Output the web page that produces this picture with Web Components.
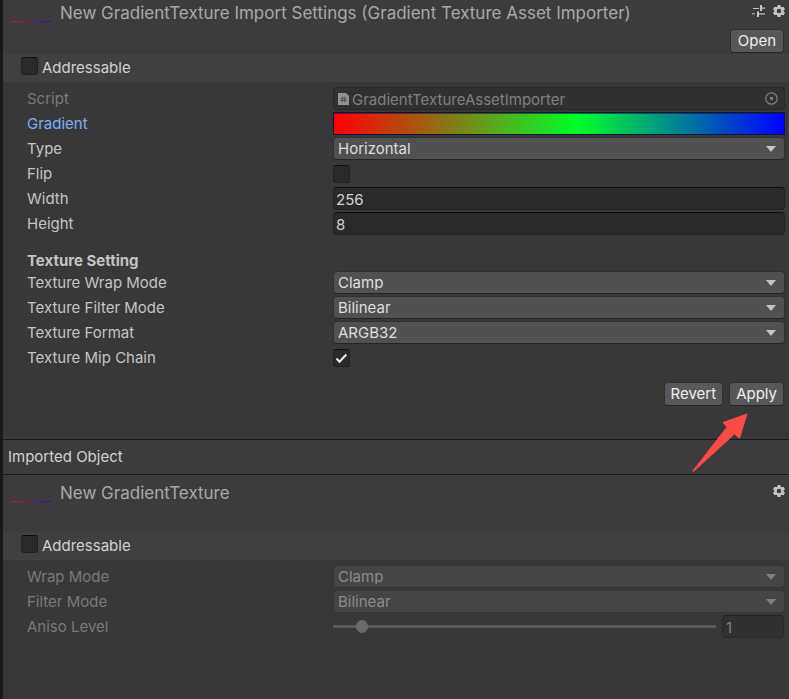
<!DOCTYPE html>
<html lang="en">
<head>
<meta charset="utf-8">
<title>Inspector</title>
<style>
  body {
    margin: 0;
    min-height: 100vh;
    background: #383838;
    color: #c4c4c4;
    font: 15px/22px Inter, "Liberation Sans", sans-serif;
  }
</style>
</head>
<body>
<inspector-panel>
  <inspector-header name="New GradientTexture Import Settings (Gradient Texture Asset Importer)" presets open></inspector-header>
  <addressable-bar></addressable-bar>
  <property-group>
    <object-field label="Script" value="GradientTextureAssetImporter"></object-field>
    <gradient-field label="Gradient"></gradient-field>
    <select-field label="Type" value="Horizontal"></select-field>
    <toggle-field label="Flip"></toggle-field>
    <text-field label="Width" value="256"></text-field>
    <text-field label="Height" value="8"></text-field>
    <group-heading>Texture Setting</group-heading>
    <select-field label="Texture Wrap Mode" value="Clamp"></select-field>
    <select-field label="Texture Filter Mode" value="Bilinear"></select-field>
    <select-field label="Texture Format" value="ARGB32"></select-field>
    <toggle-field label="Texture Mip Chain" checked></toggle-field>
  </property-group>
  <apply-bar></apply-bar>
  <section-title>Imported Object</section-title>
  <inspector-header class="lower" name="New GradientTexture"></inspector-header>
  <addressable-bar></addressable-bar>
  <property-group>
    <select-field label="Wrap Mode" value="Clamp" disabled></select-field>
    <select-field label="Filter Mode" value="Bilinear" disabled></select-field>
    <slider-field label="Aniso Level" value="1" disabled></slider-field>
  </property-group>
</inspector-panel>

<script>
const RESET = `
  *, *::before { box-sizing: border-box; }
  button, input, select { font: inherit; color: inherit; margin: 0; opacity: 1; }
  svg { display: block; }
`;
const BUTTON = `
  .btn {
    height: 24px; min-width: 54px; padding: 0 6px; line-height: 22px;
    background: #585858; color: #eeeeee;
    border: 1px solid #303030; border-bottom-color: #242424; border-radius: 4px;
  }
`;
const CHECKBOX = `
  input[type=checkbox] {
    appearance: none; width: 17px; height: 18px; flex: none;
    display: grid; place-items: center;
    background: #2a2a2a; border: 1px solid #212121; border-top-color: #0d0d0d; border-radius: 3px;
  }
  .check { display: inline-grid; }
  .check > * { grid-area: 1 / 1; }
  .check svg { pointer-events: none; visibility: hidden; }
  .check input:checked + svg { visibility: visible; }
`;
const GEAR = `<svg width="12" height="12" viewBox="0 0 12 12" aria-hidden="true">
  <path fill="#c4c4c4" fill-rule="evenodd" d="M4.6 0h2.8l.4 1.7 1 .6 1.7-.5L12 4.3l-1.3 1.2v1L12 7.7l-1.500 2.500-1.700-.5-1 .6-.4 1.700H4.600l-.4-1.700-1-.6-1.700.5L0 7.700l1.300-1.200v-1L0 4.300l1.500-2.500 1.700.5 1-.6zM6 3.700a2.300 2.300 0 1 0 0 4.600 2.300 2.300 0 0 0 0-4.600z"/></svg>`;
const PRESETS = `<svg width="13" height="12" viewBox="0 0 13 12" aria-hidden="true">
  <path fill="#c4c4c4" d="M1 3h6v1H1zM8 0h2v2.500h3v1.200h-3V6H8zM0 8.300h3v1H0zM5 6.500h2v1.800h6v1.200H7V12H5z"/></svg>`;

class Base extends HTMLElement {
  connectedCallback() {
    if (this.shadowRoot) return;
    this.attachShadow({ mode: "open" }).innerHTML = `<style>${RESET}${this.css()}</style>${this.html()}`;
  }
  attr(name) { return this.getAttribute(name) || ""; }
  css() { return ""; }
  html() { return "<slot></slot>"; }
}

class InspectorPanel extends Base {
  css() { return `:host { display: block; min-height: 100vh; box-sizing: border-box; border-left: 3px solid #191919; }`; }
}

class InspectorHeader extends Base {
  css() {
    return `${BUTTON}
      :host { display: grid; grid-template-columns: 40px minmax(0, 1fr) auto; column-gap: 9px; align-items: start;
        padding: 2px 4px 0 8px; min-height: 54px; box-sizing: border-box; background: #3c3c3c; }
      :host(.lower) { padding-top: 7px; min-height: 57px; }
      .thumb { height: 1px; margin-top: 19px; background: linear-gradient(90deg, #e01010, #80107c, #1010e8); }
      h1 { margin: 0; font-size: 17px; line-height: 23px; font-weight: 400; color: #a8a8a8; white-space: nowrap; }
      .side { display: flex; flex-direction: column; align-items: flex-end; gap: 12px; padding-top: 3px; }
      .tools { display: flex; gap: 8px; }
      .tools button { border: 0; padding: 0; background: none; }
      .open { margin-right: 1px; }`;
  }
  html() {
    return `<div class="thumb"></div><h1>${this.attr("name")}</h1>
      <div class="side"><div class="tools">
        ${this.hasAttribute("presets") ? `<button type="button" aria-label="Presets">${PRESETS}</button>` : ""}
        <button type="button" aria-label="Settings">${GEAR}</button></div>
        ${this.hasAttribute("open") ? `<button type="button" class="btn open">Open</button>` : ""}
      </div>`;
  }
}

class AddressableBar extends Base {
  css() {
    return `${CHECKBOX}
      :host { display: flex; height: 28px; box-sizing: border-box; padding: 3px 18px 0; background: #404040; border-bottom: 1px solid #444444; }
      label { display: flex; gap: 4px; color: #d2d2d2; }`;
  }
  html() { return `<label><input type="checkbox">Addressable</label>`; }
}

class PropertyGroup extends Base {
  css() { return `:host { display: flex; flex-direction: column; gap: 2px; padding: 5px 4px 0 24px; }`; }
}

class GroupHeading extends Base {
  css() { return `:host { display: block; margin-top: 16px; font-weight: 700; line-height: 16px; }`; }
}

class Field extends Base {
  css() {
    return `${CHECKBOX}
      :host { display: grid; grid-template-columns: 306px minmax(0, 1fr); align-items: center; height: 23px; }
      :host([disabled]) { color: #7a7a7a; }
      label { line-height: 23px; }
      .text { width: 100%; height: 23px; padding: 2px 2px 0; color: #d2d2d2; background: #2a2a2a;
        border: 1px solid #212121; border-top-color: #0d0d0d; border-radius: 4px; }
      :host([disabled]) .text { color: #808080; background: #313131; border-color: #292929; border-top-color: #222; }
      ${this.own()}`;
  }
  own() { return ""; }
  html() { return `<label for="c">${this.attr("label")}</label>${this.control()}`; }
}

class ObjectField extends Field {
  own() {
    return `label { color: #7a7a7a; }
      .box { display: flex; align-items: center; gap: 3px; width: 100%; height: 23px; padding: 0 6px 0 4px; color: #808080;
        background: #313131; border: 1px solid #262626; border-radius: 4px; }
      .box span { flex: 1; text-align: left; padding-top: 2px; }`;
  }
  control() {
    return `<button type="button" class="box" id="c">
      <svg width="11" height="14" viewBox="0 0 11 14" aria-hidden="true"><path fill="#919191" d="M0 1h8l3 3v9H0z"/>
        <path stroke="#3d6343" fill="none" d="M4.500 4.500l-.5 6M7 4.500l-.5 6M2.500 6.500h6M2.500 8.500h6"/></svg>
      <span>${this.attr("value")}</span>
      <svg width="13" height="13" viewBox="0 0 13 13" aria-hidden="true"><circle cx="6.500" cy="6.500" r="5.700" fill="none" stroke="#7d7d7d" stroke-width="1.300"/>
        <rect x="5" y="5" width="3" height="3" fill="#7d7d7d"/></svg></button>`;
  }
}

class GradientField extends Field {
  own() {
    return `label { color: #7baefa; }
      button { width: 100%; height: 23px; padding: 0; border: 1px solid #0c1440; box-shadow: inset 0 1px 0 rgba(20, 20, 60, .6);
        background: linear-gradient(90deg, #ff0000, #00ff2a 54%, #0000ff) padding-box; }`;
  }
  control() { return `<button type="button" id="c" aria-label="Gradient"></button>`; }
}

class SelectField extends Field {
  own() {
    return `.drop { display: grid; align-items: center; }
      .drop > * { grid-area: 1 / 1; }
      select { appearance: none; width: 100%; height: 23px; padding: 0 24px 3px 4px; color: #dedede;
        background: #515151; border: 1px solid #303030; border-bottom-color: #242424; border-radius: 4px; }
      svg { justify-self: end; margin-right: 9px; pointer-events: none; fill: #c4c4c4; }
      :host([disabled]) select { color: #8c8c8c; background: #454545; border-color: #353535; }
      :host([disabled]) svg { fill: #808080; }`;
  }
  control() {
    return `<div class="drop"><select id="c" ${this.hasAttribute("disabled") ? "disabled" : ""}><option>${this.attr("value")}</option></select>
      <svg width="10" height="6" viewBox="0 0 10 6" aria-hidden="true"><path d="M0 0h10L5 6z"/></svg></div>`;
  }
}

class ToggleField extends Field {
  control() {
    return `<span class="check"><input type="checkbox" id="c" ${this.hasAttribute("checked") ? "checked" : ""}>
      <svg width="17" height="18" viewBox="0 0 17 18" aria-hidden="true"><path d="M3.500 9.500l3 3.300 6.800-7.300" fill="none" stroke="#eeeeee" stroke-width="2"/></svg></span>`;
  }
  own() { return `.check { justify-self: start; }`; }
}

class TextField extends Field {
  control() { return `<input class="text" type="text" id="c" value="${this.attr("value")}">`; }
}

class SliderField extends Field {
  own() {
    return `.pair { display: flex; align-items: center; gap: 6px; padding-right: 1px; }
      input[type=range] { appearance: none; flex: 1; min-width: 0; height: 13px; background: none; }
      input[type=range]::-webkit-slider-runnable-track { height: 3px; background: #5a5a5a; }
      input[type=range]::-webkit-slider-thumb { appearance: none; width: 12px; height: 13px; margin-top: -5px; border-radius: 50%; background: #6b6b6b; }
      .text { width: 62px; padding-left: 3px; }`;
  }
  control() {
    const v = this.attr("value");
    return `<div class="pair"><input type="range" id="c" min="0" max="16" value="${v}" disabled>
      <input class="text" type="text" aria-label="Aniso Level value" value="${v}" disabled></div>`;
  }
}

class ApplyBar extends Base {
  css() {
    return `${BUTTON}
      :host { position: relative; display: flex; justify-content: flex-end; gap: 6px; padding: 13px 5px 33px; }
      svg { position: absolute; right: 37px; top: 43px; z-index: 1; pointer-events: none; }`;
  }
  html() {
    return `<button type="button" class="btn">Revert</button><button type="button" class="btn">Apply</button>
      <svg width="60" height="62" viewBox="0 0 60 62" aria-hidden="true"><path fill="#fb4b46" stroke="#fb4b46" stroke-linejoin="round" d="M55 2L31 10.500l4 4.500L.8 59l.7.500L42.500 22l5 4.300z"/></svg>`;
  }
}

class SectionTitle extends Base {
  css() {
    return `:host { display: block; background: #3c3c3c; border: solid #1a1a1a; border-width: 1px 0; padding: 0 5px; }
      h2 { margin: 0; font-size: 15px; line-height: 34px; font-weight: 400; color: #d2d2d2; }`;
  }
  html() { return `<h2><slot></slot></h2>`; }
}

customElements.define("inspector-panel", InspectorPanel);
customElements.define("inspector-header", InspectorHeader);
customElements.define("addressable-bar", AddressableBar);
customElements.define("property-group", PropertyGroup);
customElements.define("group-heading", GroupHeading);
customElements.define("object-field", ObjectField);
customElements.define("gradient-field", GradientField);
customElements.define("select-field", SelectField);
customElements.define("toggle-field", ToggleField);
customElements.define("text-field", TextField);
customElements.define("slider-field", SliderField);
customElements.define("apply-bar", ApplyBar);
customElements.define("section-title", SectionTitle);
</script>
</body>
</html>
